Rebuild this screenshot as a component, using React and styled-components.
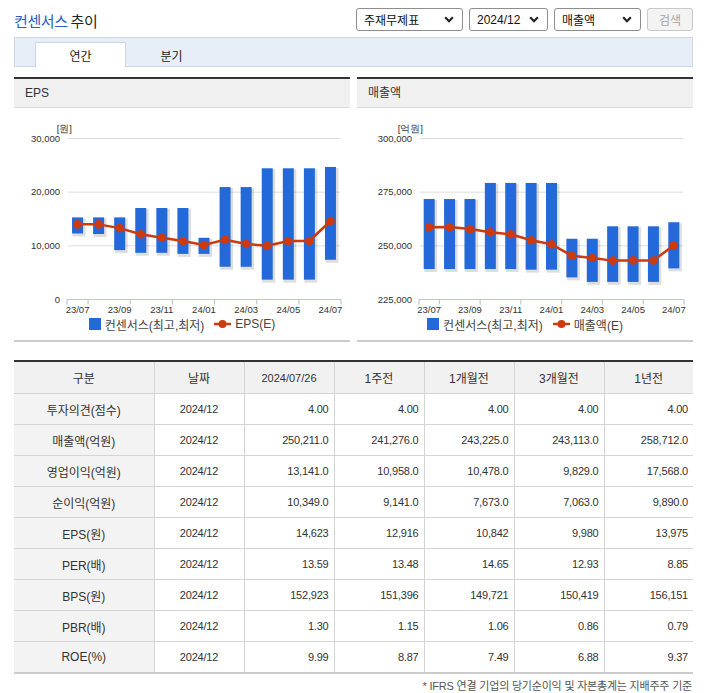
import styled, { createGlobalStyle } from "styled-components";

const GlobalStyle = createGlobalStyle`
  body {
    margin: 0;
    background: #fff;
    font-family: "Liberation Sans", "Noto Sans CJK KR", sans-serif;
    color: #333;
  }
`;

const months = ["23/07", "", "23/09", "", "23/11", "", "24/01", "", "24/03", "", "24/05", "", "24/07"];

const epsChart = {
  title: "EPS",
  unit: "[원]",
  min: 0,
  max: 30000,
  ticks: ["0", "10,000", "20,000", "30,000"],
  plotLeft: 53,
  plotRight: 327,
  labelRight: 46,
  unitRight: 44,
  lineName: "EPS(E)",
  bars: [
    [15300, 12300], [15300, 12200], [15300, 9200], [17050, 8700], [17050, 8700],
    [17050, 8500], [11500, 8500], [20950, 6100], [20950, 6100], [24450, 3700],
    [24450, 3700], [24450, 3700], [24700, 7400],
  ],
  line: [14000, 14000, 13300, 12150, 11500, 10900, 10150, 11150, 10350, 10000, 10900, 10900, 14623],
};

const salesChart = {
  title: "매출액",
  unit: "[억원]",
  min: 225000,
  max: 300000,
  ticks: ["225,000", "250,000", "275,000", "300,000"],
  plotLeft: 62,
  plotRight: 327,
  labelRight: 55,
  unitRight: 52,
  lineName: "매출액(E)",
  bars: [
    [271800, 239200], [271800, 239200], [271800, 239200], [279300, 239200], [279300, 239200],
    [279300, 238900], [279300, 238900], [253300, 235300], [253300, 233200], [259100, 233200],
    [259100, 233200], [259100, 233200], [261000, 239500],
  ],
  line: [258712, 258800, 257800, 256300, 255400, 252600, 250700, 245400, 244300, 243113, 243225, 243200, 250211],
};

const rows = [
  ["투자의견(점수)", "4.00", "4.00", "4.00", "4.00", "4.00"],
  ["매출액(억원)", "250,211.0", "241,276.0", "243,225.0", "243,113.0", "258,712.0"],
  ["영업이익(억원)", "13,141.0", "10,958.0", "10,478.0", "9,829.0", "17,568.0"],
  ["순이익(억원)", "10,349.0", "9,141.0", "7,673.0", "7,063.0", "9,890.0"],
  ["EPS(원)", "14,623", "12,916", "10,842", "9,980", "13,975"],
  ["PER(배)", "13.59", "13.48", "14.65", "12.93", "8.85"],
  ["BPS(원)", "152,923", "151,396", "149,721", "150,419", "156,151"],
  ["PBR(배)", "1.30", "1.15", "1.06", "0.86", "0.79"],
  ["ROE(%)", "9.99", "8.87", "7.49", "6.88", "9.37"],
];

const Page = styled.div`
  width: 679px;
  padding: 0 12px 0 14px;
`;

const Header = styled.div`
  display: flex;
  align-items: center;
  justify-content: space-between;
  height: 37px;
`;

const Title = styled.h2`
  margin: 3px 0 0;
  font-size: 15px;
  font-weight: normal;
  font-family: "Noto Sans CJK KR", sans-serif;
  color: #222;
  letter-spacing: -0.4px;
`;

const Blue = styled.span`
  color: #2b5cc9;
`;

const Controls = styled.div`
  display: flex;
  gap: 6px;
  padding-top: 2px;
`;

const SelectBox = styled.div`
  box-sizing: border-box;
  width: ${(p) => p.w}px;
  height: 23px;
  border: 1px solid #8e8e8e;
  border-radius: 3px;
  padding: 0 8px 0 7px;
  display: flex;
  align-items: center;
  justify-content: space-between;
  font-size: 12px;
  color: #111;
`;

const SearchButton = styled.button`
  box-sizing: border-box;
  width: 46px;
  height: 23px;
  border: 1px solid #c8c8c8;
  border-radius: 3px;
  background: #f3f3f3;
  color: #a5a5a5;
  font-size: 12px;
  font-family: "Noto Sans CJK KR", sans-serif;
  padding: 0;
`;

const TabBar = styled.div`
  box-sizing: border-box;
  height: 30px;
  display: flex;
  align-items: flex-end;
  padding-left: 20px;
  background: #e8eef8;
  border: 1px solid #cdd7e6;
`;

const Tab = styled.div`
  box-sizing: border-box;
  width: 91px;
  height: 25px;
  margin-bottom: -1px;
  display: flex;
  align-items: center;
  justify-content: center;
  font-size: 12px;
  color: #222;
  background: ${(p) => (p.active ? "#fff" : "transparent")};
  border: 1px solid ${(p) => (p.active ? "#cdd7e6" : "transparent")};
  border-bottom: none;
`;

const ChartRow = styled.div`
  display: flex;
  gap: 7px;
  margin-top: 10px;
`;

const Panel = styled.div`
  width: 336px;
  border-top: 2px solid #333;
  border-bottom: 2px solid #cccccc;
`;

const PanelHead = styled.div`
  height: 28px;
  line-height: 28px;
  padding-left: 11px;
  background: #f0f0f0;
  border-bottom: 1px solid #dcdcdc;
  font-size: 12px;
  color: #333;
`;

const ChartBody = styled.div`
  padding-bottom: 8px;

  svg.plot {
    display: block;
  }
`;

const Legend = styled.div`
  height: 16px;
  display: flex;
  align-items: center;
  justify-content: center;
  gap: 6px;
  font-size: 12px;
  color: #444;
`;

const LegendSwatch = styled.span`
  width: 12px;
  height: 12px;
  background: #2469d9;
`;

const LegendItem = styled.span`
  display: flex;
  align-items: center;
  gap: 4px;
  margin-right: ${(p) => p.gapRight || 0}px;
`;

const Table = styled.table`
  width: 679px;
  margin-top: 18px;
  border-collapse: collapse;
  table-layout: fixed;
  border-top: 2px solid #333;
  border-bottom: 2px solid #cccccc;
`;

const Th = styled.th`
  height: 31px;
  padding: 0;
  background: #f1f1f1;
  border: 1px solid #d4d4d4;
  border-top: none;
  font-weight: normal;
  font-size: ${(p) => (p.num ? 11 : 12)}px;
  color: #333;
  &:first-child { border-left: none; }
  &:last-child { border-right: none; }
`;

const Td = styled.td`
  height: 30px;
  padding: ${(p) => (p.align === "right" ? "0 5px 0 0" : "0")};
  text-align: ${(p) => p.align || "center"};
  background: ${(p) => (p.label ? "#f3f3f3" : "#fff")};
  border: 1px solid #d4d4d4;
  font-size: ${(p) => (p.label ? 12 : 11)}px;
  letter-spacing: ${(p) => (p.label ? 0 : -0.2)}px;
  color: #333;
  &:first-child { border-left: none; }
  &:last-child { border-right: none; }
`;

const Note = styled.p`
  margin: 5px 1px 0 0;
  line-height: 14px;
  text-align: right;
  font-size: 11px;
  color: #555;
  letter-spacing: -0.2px;
`;

const Chevron = () => (
  <svg width="10" height="7" viewBox="0 0 10 7">
    <path d="M1.2 1.3 L5 5.2 L8.8 1.3" fill="none" stroke="#222" strokeWidth="2.2" />
  </svg>
);

const LineMark = () => (
  <svg width="17" height="10" viewBox="0 0 17 10">
    <line x1="0" y1="5" x2="17" y2="5" stroke="#cc3a0e" strokeWidth="2.5" />
    <circle cx="8.5" cy="5" r="4" fill="#cc3a0e" />
  </svg>
);

const TOP = 30.5;
const BOTTOM = 191.5;

const Chart = ({ cfg }) => {
  const step = (cfg.plotRight - cfg.plotLeft) / cfg.bars.length;
  const cx = (i) => cfg.plotLeft + step * (i + 0.5);
  const y = (v) => BOTTOM - ((v - cfg.min) / (cfg.max - cfg.min)) * (BOTTOM - TOP);
  const grid = [0, 1, 2, 3].map((k) => BOTTOM - k * ((BOTTOM - TOP) / 3));
  const tickXs = [cfg.plotLeft, cfg.plotRight];
  for (let i = 1; i < cfg.bars.length; i += 2) tickXs.push(cfg.plotLeft + step * i);
  const pts = cfg.line.map((v, i) => `${cx(i)},${y(v)}`).join(" ");
  const axisFont = { fontFamily: '"Liberation Sans Narrow", "Liberation Sans", sans-serif' };

  return (
    <svg className="plot" width="336" height="208" viewBox="0 0 336 208">
      {grid.slice(1).map((gy) => (
        <line key={gy} x1={cfg.plotLeft + 1} x2={cfg.plotRight - 1} y1={gy} y2={gy} stroke="#dedede" strokeWidth="1" />
      ))}
      {grid.map((gy, k) => (
        <text key={k} x={cfg.labelRight} y={gy + 3} textAnchor="end" fontSize="9.5" fill="#333" style={axisFont}>
          {cfg.ticks[k]}
        </text>
      ))}
      <text x={cfg.unitRight + 14} y={TOP - 7} textAnchor="end" fontSize="9.5" fill="#333" style={axisFont}>
        {cfg.unit}
      </text>
      {cfg.bars.map(([hi, lo], i) => (
        <g key={i}>
          <rect x={cx(i) - 5} y={y(hi) + 1} width="13" height={y(lo) - y(hi) + 2} fill="#000" opacity="0.13" />
          <rect x={cx(i) - 5.5} y={y(hi)} width="11" height={y(lo) - y(hi)} fill="#2469d9" />
        </g>
      ))}
      <line x1={cfg.plotLeft} x2={cfg.plotRight} y1={BOTTOM} y2={BOTTOM} stroke="#b7c8dd" strokeWidth="1.2" />
      {tickXs.map((tx) => (
        <line key={tx} x1={tx} x2={tx} y1={BOTTOM} y2={BOTTOM + 5} stroke="#b7c8dd" strokeWidth="1.2" />
      ))}
      {months.map((m, i) =>
        m ? (
          <text key={i} x={cx(i)} y={BOTTOM + 13} textAnchor="middle" fontSize="9.5" fill="#333" style={axisFont}>
            {m}
          </text>
        ) : null
      )}
      <polyline points={pts} fill="none" stroke="#cc3a0e" strokeWidth="2.5" strokeLinejoin="round" />
      {cfg.line.map((v, i) => (
        <circle key={i} cx={cx(i)} cy={y(v)} r="4.3" fill="#cc3a0e" />
      ))}
    </svg>
  );
};

const ChartPanel = ({ cfg }) => (
  <Panel>
    <PanelHead>{cfg.title}</PanelHead>
    <ChartBody>
      <Chart cfg={cfg} />
      <Legend>
        <LegendItem gapRight={4}>
          <LegendSwatch />
          컨센서스(최고,최저)
        </LegendItem>
        <LegendItem>
          <LineMark />
          {cfg.lineName}
        </LegendItem>
      </Legend>
    </ChartBody>
  </Panel>
);

export default function App() {
  return (
    <Page>
      <GlobalStyle />
      <Header>
        <Title>
          <Blue>컨센서스</Blue> 추이
        </Title>
        <Controls>
          <SelectBox w={107}>
            주재무제표
            <Chevron />
          </SelectBox>
          <SelectBox w={79}>
            2024/12
            <Chevron />
          </SelectBox>
          <SelectBox w={87}>
            매출액
            <Chevron />
          </SelectBox>
          <SearchButton>검색</SearchButton>
        </Controls>
      </Header>

      <TabBar>
        <Tab active>연간</Tab>
        <Tab>분기</Tab>
      </TabBar>

      <ChartRow>
        <ChartPanel cfg={epsChart} />
        <ChartPanel cfg={salesChart} />
      </ChartRow>

      <Table>
        <colgroup>
          <col style={{ width: 140 }} />
          <col style={{ width: 90 }} />
          <col style={{ width: 90 }} />
          <col style={{ width: 90 }} />
          <col style={{ width: 90 }} />
          <col style={{ width: 90 }} />
          <col style={{ width: 89 }} />
        </colgroup>
        <thead>
          <tr>
            <Th>구분</Th>
            <Th>날짜</Th>
            <Th num>2024/07/26</Th>
            <Th>1주전</Th>
            <Th>1개월전</Th>
            <Th>3개월전</Th>
            <Th>1년전</Th>
          </tr>
        </thead>
        <tbody>
          {rows.map(([label, ...vals]) => (
            <tr key={label}>
              <Td label>{label}</Td>
              <Td>2024/12</Td>
              {vals.map((v, i) => (
                <Td key={i} align="right">
                  {v}
                </Td>
              ))}
            </tr>
          ))}
        </tbody>
      </Table>
      <Note>* IFRS 연결 기업의 당기순이익 및 자본총계는 지배주주 기준</Note>
    </Page>
  );
}
